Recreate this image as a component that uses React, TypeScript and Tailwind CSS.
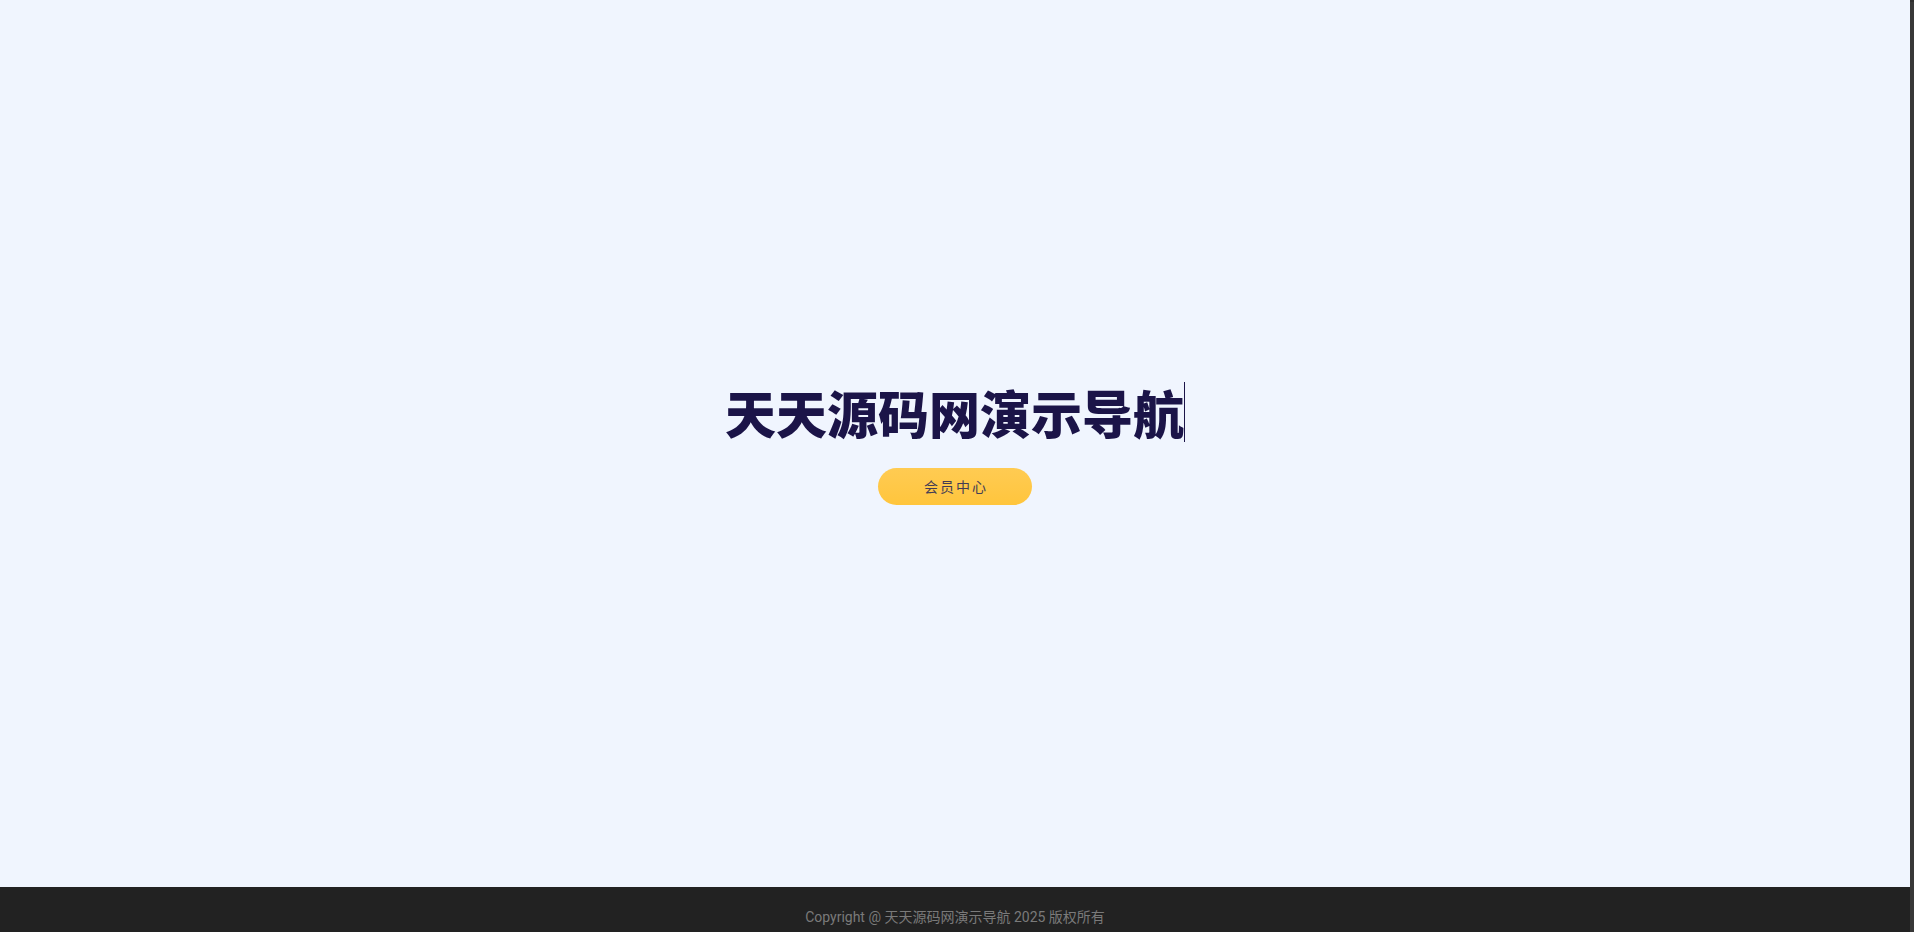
import React from 'react'

export default function App() {
  return (
    <div className="flex h-screen bg-[#f0f5fe] font-['Roboto','Noto_Sans_CJK_SC',sans-serif]">
      <div className="flex-1 overflow-y-auto [scrollbar-width:none]">
        {/* Hero */}
        <main className="flex h-[887px] flex-col items-center justify-center">
          <h1 className="inline-block border-r border-[#1b1448] font-['Noto_Sans_CJK_SC',sans-serif] text-[51px] leading-[60px] font-black text-[#1b1448]">
            天天源码网演示导航
          </h1>
          <a
            href="#"
            className="mt-[26px] flex h-[37px] w-[154px] items-center justify-center rounded-full bg-gradient-to-b from-[#ffcb52] to-[#ffc53c] pl-[2px] font-['Noto_Sans_CJK_SC',sans-serif] text-[14px] font-normal tracking-[2px] text-[#443d55]"
          >
            会员中心
          </a>
        </main>

        {/* Footer */}
        <footer className="flex h-[60px] items-center justify-center bg-[#222222] text-[14px] text-[#7a7a7a]">
          Copyright @ 天天源码网演示导航 2025 版权所有
        </footer>
      </div>

      {/* scrollbar */}
      <div className="flex w-[4px] flex-col bg-[#383838]">
        <div className="h-[2px] bg-[#2e2e2e]" />
      </div>
    </div>
  )
}
